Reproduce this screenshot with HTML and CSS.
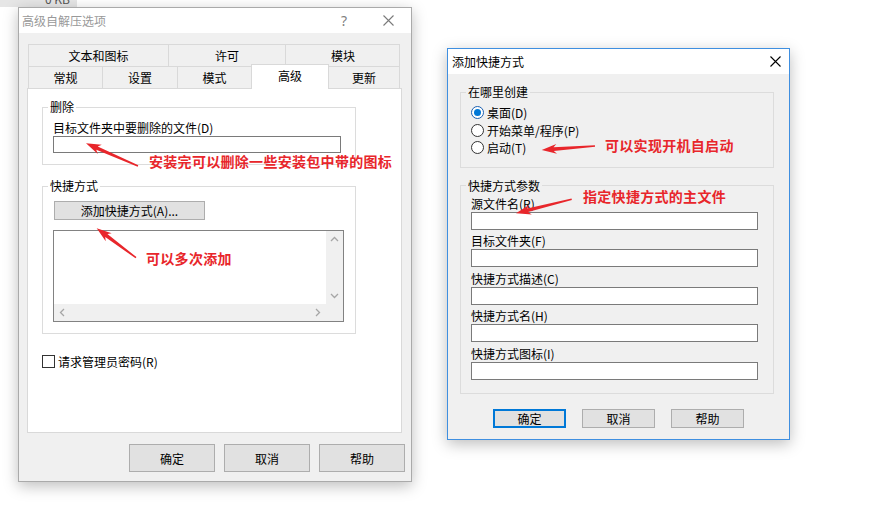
FILE: index.html
```html
<!DOCTYPE html>
<html lang="zh-CN">

<head>
    <meta charset="UTF-8">
    <title>高级自解压选项</title>
    <link rel="stylesheet" href="styles.css">
</head>

<body>
    <div class="desktop">
        <div class="taskstrip"><span>0 KB</span></div>

        <!-- 高级自解压选项 -->
        <div class="window win-adv">
            <div class="titlebar">
                <span class="title">高级自解压选项</span>
                <span class="cap-btn cap-help">?</span>
                <span class="cap-btn">
                    <svg width="11" height="11" viewBox="0 0 11 11"><path d="M0.5 0.5L10.5 10.5M10.5 0.5L0.5 10.5" stroke="#7a7a7a" stroke-width="1.1" fill="none"/></svg>
                </span>
            </div>
            <div class="adv-body">
                <div class="tabs">
                    <div class="tab-row">
                        <div class="tab tab-w140">文本和图标</div>
                        <div class="tab tab-w117">许可</div>
                        <div class="tab tab-w115">模块</div>
                    </div>
                    <div class="tab-row">
                        <div class="tab tab-w74">常规</div>
                        <div class="tab tab-w75">设置</div>
                        <div class="tab tab-w74">模式</div>
                        <div class="tab tab-w78 is-active">高级</div>
                        <div class="tab tab-w71">更新</div>
                    </div>
                </div>
                <div class="tab-panel">
                    <fieldset class="group group-delete">
                        <legend>删除</legend>
                        <span class="field-label">目标文件夹中要删除的文件(D)</span>
                        <div class="text-input input-delete"></div>
                    </fieldset>

                    <fieldset class="group group-shortcut">
                        <legend>快捷方式</legend>
                        <button class="btn btn-add">添加快捷方式(A)...</button>
                        <div class="listbox">
                            <div class="list-area"></div>
                            <div class="scroll-v">
                                <svg width="17" height="17" viewBox="0 0 17 17"><path d="M5 10L8.5 6.5L12 10" stroke="#a6a6a6" stroke-width="1.3" fill="none"/></svg>
                                <svg width="17" height="17" viewBox="0 0 17 17"><path d="M5 7L8.5 10.5L12 7" stroke="#a6a6a6" stroke-width="1.3" fill="none"/></svg>
                            </div>
                            <div class="scroll-h">
                                <svg width="17" height="17" viewBox="0 0 17 17"><path d="M10 5L6.5 8.5L10 12" stroke="#a6a6a6" stroke-width="1.3" fill="none"/></svg>
                                <svg width="17" height="17" viewBox="0 0 17 17"><path d="M7 5L10.5 8.5L7 12" stroke="#a6a6a6" stroke-width="1.3" fill="none"/></svg>
                            </div>
                            <div class="scroll-corner"></div>
                        </div>
                    </fieldset>

                    <div class="check-row">
                        <span class="check-box"></span>
                        <span class="check-label">请求管理员密码(R)</span>
                    </div>
                </div>
                <div class="btn-row">
                    <button class="btn btn-dialog">确定</button>
                    <button class="btn btn-dialog">取消</button>
                    <button class="btn btn-dialog">帮助</button>
                </div>
            </div>
        </div>

        <!-- 添加快捷方式 -->
        <div class="window win-add">
            <div class="titlebar">
                <span class="title">添加快捷方式</span>
                <span class="cap-btn cap-close-small">
                    <svg width="11" height="11" viewBox="0 0 11 11"><path d="M0.5 0.5L10.5 10.5M10.5 0.5L0.5 10.5" stroke="#000" stroke-width="1.1" fill="none"/></svg>
                </span>
            </div>
            <div class="add-body">
                <fieldset class="group group-where">
                    <legend>在哪里创建</legend>
                    <div class="radio-row first">
                        <span class="radio is-checked"></span>
                        <span>桌面(D)</span>
                    </div>
                    <div class="radio-row">
                        <span class="radio"></span>
                        <span>开始菜单/程序(P)</span>
                    </div>
                    <div class="radio-row">
                        <span class="radio"></span>
                        <span>启动(T)</span>
                    </div>
                </fieldset>

                <fieldset class="group group-params">
                    <legend>快捷方式参数</legend>
                    <div class="param-field">
                        <span class="param-label">源文件名(R)</span>
                        <div class="text-input param-input"></div>
                    </div>
                    <div class="param-field">
                        <span class="param-label">目标文件夹(F)</span>
                        <div class="text-input param-input"></div>
                    </div>
                    <div class="param-field">
                        <span class="param-label">快捷方式描述(C)</span>
                        <div class="text-input param-input"></div>
                    </div>
                    <div class="param-field">
                        <span class="param-label">快捷方式名(H)</span>
                        <div class="text-input param-input"></div>
                    </div>
                    <div class="param-field">
                        <span class="param-label">快捷方式图标(I)</span>
                        <div class="text-input param-input"></div>
                    </div>
                </fieldset>

                <div class="add-buttons">
                    <button class="btn btn-small is-default">确定</button>
                    <button class="btn btn-small">取消</button>
                    <button class="btn btn-small">帮助</button>
                </div>
            </div>
        </div>

        <!-- annotations -->
        <span class="note note-delete">安装完可以删除一些安装包中带的图标</span>
        <span class="note note-multi">可以多次添加</span>
        <span class="note note-startup">可以实现开机自启动</span>
        <span class="note note-main">指定快捷方式的主文件</span>

        <svg class="arrows" width="871" height="520" viewBox="0 0 871 520">
            <polygon points="138.3,165.3 97.72,146.45 101.76,144.72 86,143.3 97.76,153.89 96.28,149.75 137.7,166.7" />
            <polygon points="136.45,257.1 107.39,234.05 111.71,233.29 96.7,228.3 105.71,241.29 105.23,236.93 135.55,258.3" />
            <polygon points="594.94,145.25 553.54,147.3 556.29,143.89 541.7,150 557.03,153.87 553.8,150.9 595.06,146.75" />
            <polygon points="571.52,198.57 527.2,208.62 529.33,204.79 516,213.3 531.77,214.49 528.08,212.12 571.88,200.03" />
        </svg>
    </div>
</body>

</html>
```

FILE: styles.css
```css
* {
    box-sizing: border-box;
}

html,
body {
    margin: 0;
    padding: 0;
}

body {
    width: 871px;
    height: 520px;
    overflow: hidden;
    background: #fff;
    color: #000;
    font-family: "Noto Sans CJK SC", "Noto Sans", sans-serif;
    font-size: 12px;
}

.desktop {
    position: relative;
    width: 871px;
    height: 520px;
}

.taskstrip {
    position: absolute;
    left: 0;
    top: 0;
    width: 77px;
    height: 7px;
    overflow: hidden;
    background: #e6e6e6;
}

.taskstrip span {
    display: block;
    margin: -7px 0 0 45px;
    line-height: 12px;
    color: #555;
}

/* windows */
.window {
    position: absolute;
    display: flex;
    flex-direction: column;
    background: #f0f0f0;
    box-shadow: 0 4px 14px rgba(0, 0, 0, 0.26);
}

.win-adv {
    left: 18px;
    top: 7px;
    width: 394px;
    height: 475px;
    border: 1px solid #aaa;
}

.win-add {
    left: 447px;
    top: 48px;
    width: 343px;
    height: 392px;
    border: 1px solid #3f8fe0;
}

.titlebar {
    flex: none;
    display: flex;
    align-items: center;
    height: 25px;
    background: #fff;
}

.title {
    flex: 1;
    padding-left: 3px;
    line-height: 25px;
}

.win-adv .title {
    color: #999;
}

.win-add .title {
    padding-left: 4px;
}

.cap-btn {
    display: flex;
    align-items: center;
    justify-content: center;
    width: 46px;
    height: 25px;
}

.cap-help {
    color: #808080;
    font-family: "Noto Sans", sans-serif;
    font-size: 14px;
    padding-left: 4px;
}

.cap-close-small {
    width: 28px;
}

/* left dialog */
.adv-body {
    flex: 1;
    display: flex;
    flex-direction: column;
    padding: 11px 9px 0 8px;
}

.tabs {
    margin: 0 2px 0 1px;
}

.tab-row {
    display: flex;
    height: 22px;
    border-right: 1px solid #d9d9d9;
}

.tab {
    flex: none;
    border-top: 1px solid #d9d9d9;
    border-left: 1px solid #d9d9d9;
    text-align: center;
    line-height: 21px;
}

.tab-w140 { width: 140px; }
.tab-w117 { width: 117px; }
.tab-w115 { width: 115px; }
.tab-w74 { width: 74px; }
.tab-w75 { width: 75px; }
.tab-w78 { width: 78px; }
.tab-w71 { width: 71px; }

.tab.is-active {
    position: relative;
    z-index: 1;
    height: 25px;
    margin: -2px -1px 0 0;
    background: #fff;
    border-right: 1px solid #d9d9d9;
    line-height: 22px;
}

.tab-panel {
    height: 345px;
    padding: 10px 0 0 14px;
    background: #fff;
    border: 1px solid #d9d9d9;
}

.group {
    min-width: 0;
    margin: 0;
    padding: 0 10px;
    border: 1px solid #dcdcdc;
}

.group legend {
    margin-left: -5px;
    padding: 0 2px;
    line-height: 16px;
}

.group-delete {
    width: 314px;
    padding-bottom: 11px;
}

.field-label {
    display: block;
    margin-top: 6px;
    line-height: 14px;
}

.text-input {
    background: #fff;
    border: 1px solid #7a7a7a;
}

.input-delete {
    width: 288px;
    height: 17px;
    margin-top: 1px;
}

.group-shortcut {
    width: 314px;
    margin-top: 13px;
    padding-bottom: 11px;
}

.btn {
    display: flex;
    align-items: center;
    justify-content: center;
    padding: 0;
    background: #e1e1e1;
    border: 1px solid #adadad;
    color: #000;
    font: inherit;
}

.btn-add {
    width: 151px;
    height: 19px;
    margin: 7px 0 0 1px;
}

.listbox {
    display: grid;
    grid-template-columns: 1fr 17px;
    grid-template-rows: 1fr 17px;
    width: 291px;
    height: 92px;
    margin-top: 10px;
    background: #fff;
    border: 1px solid #828282;
}

.scroll-v {
    display: flex;
    flex-direction: column;
    justify-content: space-between;
    background: #f0f0f0;
}

.scroll-h {
    display: flex;
    justify-content: space-between;
    background: #f0f0f0;
}

.scroll-corner {
    background: #f0f0f0;
}

.scroll-v svg,
.scroll-h svg {
    display: block;
}

.check-row {
    display: flex;
    align-items: center;
    gap: 3px;
    margin-top: 21px;
    line-height: 13px;
}

.check-box {
    width: 13px;
    height: 13px;
    background: #fff;
    border: 1px solid #333;
}

.btn-row {
    display: flex;
    justify-content: flex-end;
    gap: 9px;
    margin: 11px -3px 0 0;
}

.btn-dialog {
    width: 86px;
    height: 28px;
}

/* right dialog */
.add-body {
    flex: 1;
    display: flex;
    flex-direction: column;
    padding: 10px 0 0 12px;
}

.group-where {
    width: 314px;
    padding-bottom: 10px;
}

.radio-row {
    display: flex;
    align-items: center;
    gap: 3px;
    height: 17.75px;
}

.radio-row.first {
    margin-top: 3.5px;
}

.radio {
    display: flex;
    align-items: center;
    justify-content: center;
    width: 13px;
    height: 13px;
    background: #fff;
    border: 1px solid #333;
    border-radius: 50%;
}

.radio.is-checked {
    border-color: #1a5fb0;
}

.radio.is-checked::after {
    content: "";
    width: 7px;
    height: 7px;
    border-radius: 50%;
    background: #0078d7;
}

.group-params {
    width: 314px;
    margin-top: 10px;
    padding-bottom: 13px;
}

.param-field + .param-field {
    margin-top: 3.5px;
}

.param-label {
    display: block;
    line-height: 15px;
}

.param-field:first-of-type .param-label {
    margin-top: 2px;
}

.param-input {
    width: 287px;
    height: 18px;
    margin-top: 1px;
}

.add-buttons {
    display: flex;
    justify-content: center;
    gap: 16px;
    margin: 15px 0 0 -12px;
}

.btn-small {
    width: 73px;
    height: 19px;
}

.btn-small.is-default {
    border: 2px solid #0078d7;
}

/* annotations */
.note {
    position: absolute;
    z-index: 5;
    color: #e8262b;
    font-size: 14px;
    font-weight: bold;
    letter-spacing: 0.3px;
    line-height: 16px;
    white-space: nowrap;
}

.note-delete {
    left: 149px;
    top: 153px;
}

.note-multi {
    left: 146px;
    top: 250px;
}

.note-startup {
    left: 605px;
    top: 137px;
}

.note-main {
    left: 583px;
    top: 188px;
}

.arrows {
    position: absolute;
    left: 0;
    top: 0;
    z-index: 6;
    pointer-events: none;
    fill: #e8262b;
}
```
